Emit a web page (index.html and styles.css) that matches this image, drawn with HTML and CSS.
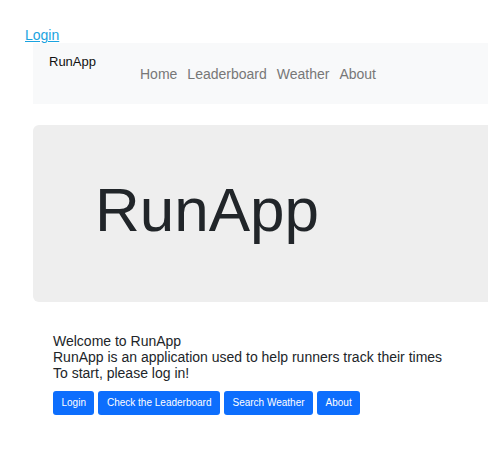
FILE: index.html
```html
<!DOCTYPE html>
<html>
<head>
<meta charset="utf-8">
<title>RunApp</title>
<link rel="stylesheet" href="styles.css">
</head>
<body>
<div class="top">
  <a class="login-link" href="#">Login</a>
</div>
<nav class="navbar">
  <span class="brand">RunApp</span>
  <ul class="nav-links">
    <li><a href="#">Home</a></li>
    <li><a href="#">Leaderboard</a></li>
    <li><a href="#">Weather</a></li>
    <li><a href="#">About</a></li>
  </ul>
</nav>
<section class="jumbotron">
  <h1 class="jumbo-title">RunApp</h1>
</section>
<main class="intro">
  <p class="intro-line">Welcome to RunApp</p>
  <p class="intro-line">RunApp is an application used to help runners track their times</p>
  <p class="intro-line">To start, please log in!</p>
  <div class="actions">
    <button class="btn">Login</button>
    <button class="btn">Check the Leaderboard</button>
    <button class="btn">Search Weather</button>
    <button class="btn">About</button>
  </div>
</main>
</body>
</html>
```

FILE: styles.css
```css
html, body {
  margin: 0;
  padding: 0;
  overflow: hidden;
}
body {
  font-family: "Liberation Sans", Arial, sans-serif;
  color: #212529;
  background: #fff;
  width: 488px;
}
.top {
  padding: 26px 0 0 25px;
  height: 17px;
}
.login-link {
  font-size: 14px;
  line-height: 16px;
  color: #1aa3e0;
  text-decoration: underline;
}
.navbar {
  margin-left: 33px;
  width: 520px;
  height: 61px;
  box-sizing: border-box;
  background: #f8f9fa;
  display: flex;
  align-items: flex-start;
  padding: 11px 16px;
}
.brand {
  font-size: 13px;
  line-height: 15px;
  color: #111;
}
.nav-links {
  list-style: none;
  margin: 11px 0 0 44px;
  padding: 0;
  display: flex;
  gap: 10px;
}
.nav-links a {
  font-size: 14px;
  line-height: 16px;
  color: #777;
  text-decoration: none;
}
.jumbotron {
  margin: 21px 0 0 33px;
  width: 520px;
  height: 177px;
  box-sizing: border-box;
  background: #eeeeee;
  border-radius: 6px;
  padding: 48px 0 0 62px;
}
.jumbo-title {
  margin: 0;
  font-size: 62px;
  line-height: 74px;
  font-weight: 400;
  color: #212529;
}
.intro {
  margin: 31px 0 0 53px;
}
.intro-line {
  margin: 0;
  font-size: 14px;
  line-height: 16px;
  color: #212529;
}
.actions {
  display: flex;
  gap: 4px;
  margin-top: 10px;
}
.btn {
  font-family: "Liberation Sans", Arial, sans-serif;
  font-size: 10px;
  line-height: 24px;
  height: 24px;
  padding: 0 8.5px;
  border: none;
  border-radius: 3px;
  background: #0d6efd;
  color: #fff;
}
```
